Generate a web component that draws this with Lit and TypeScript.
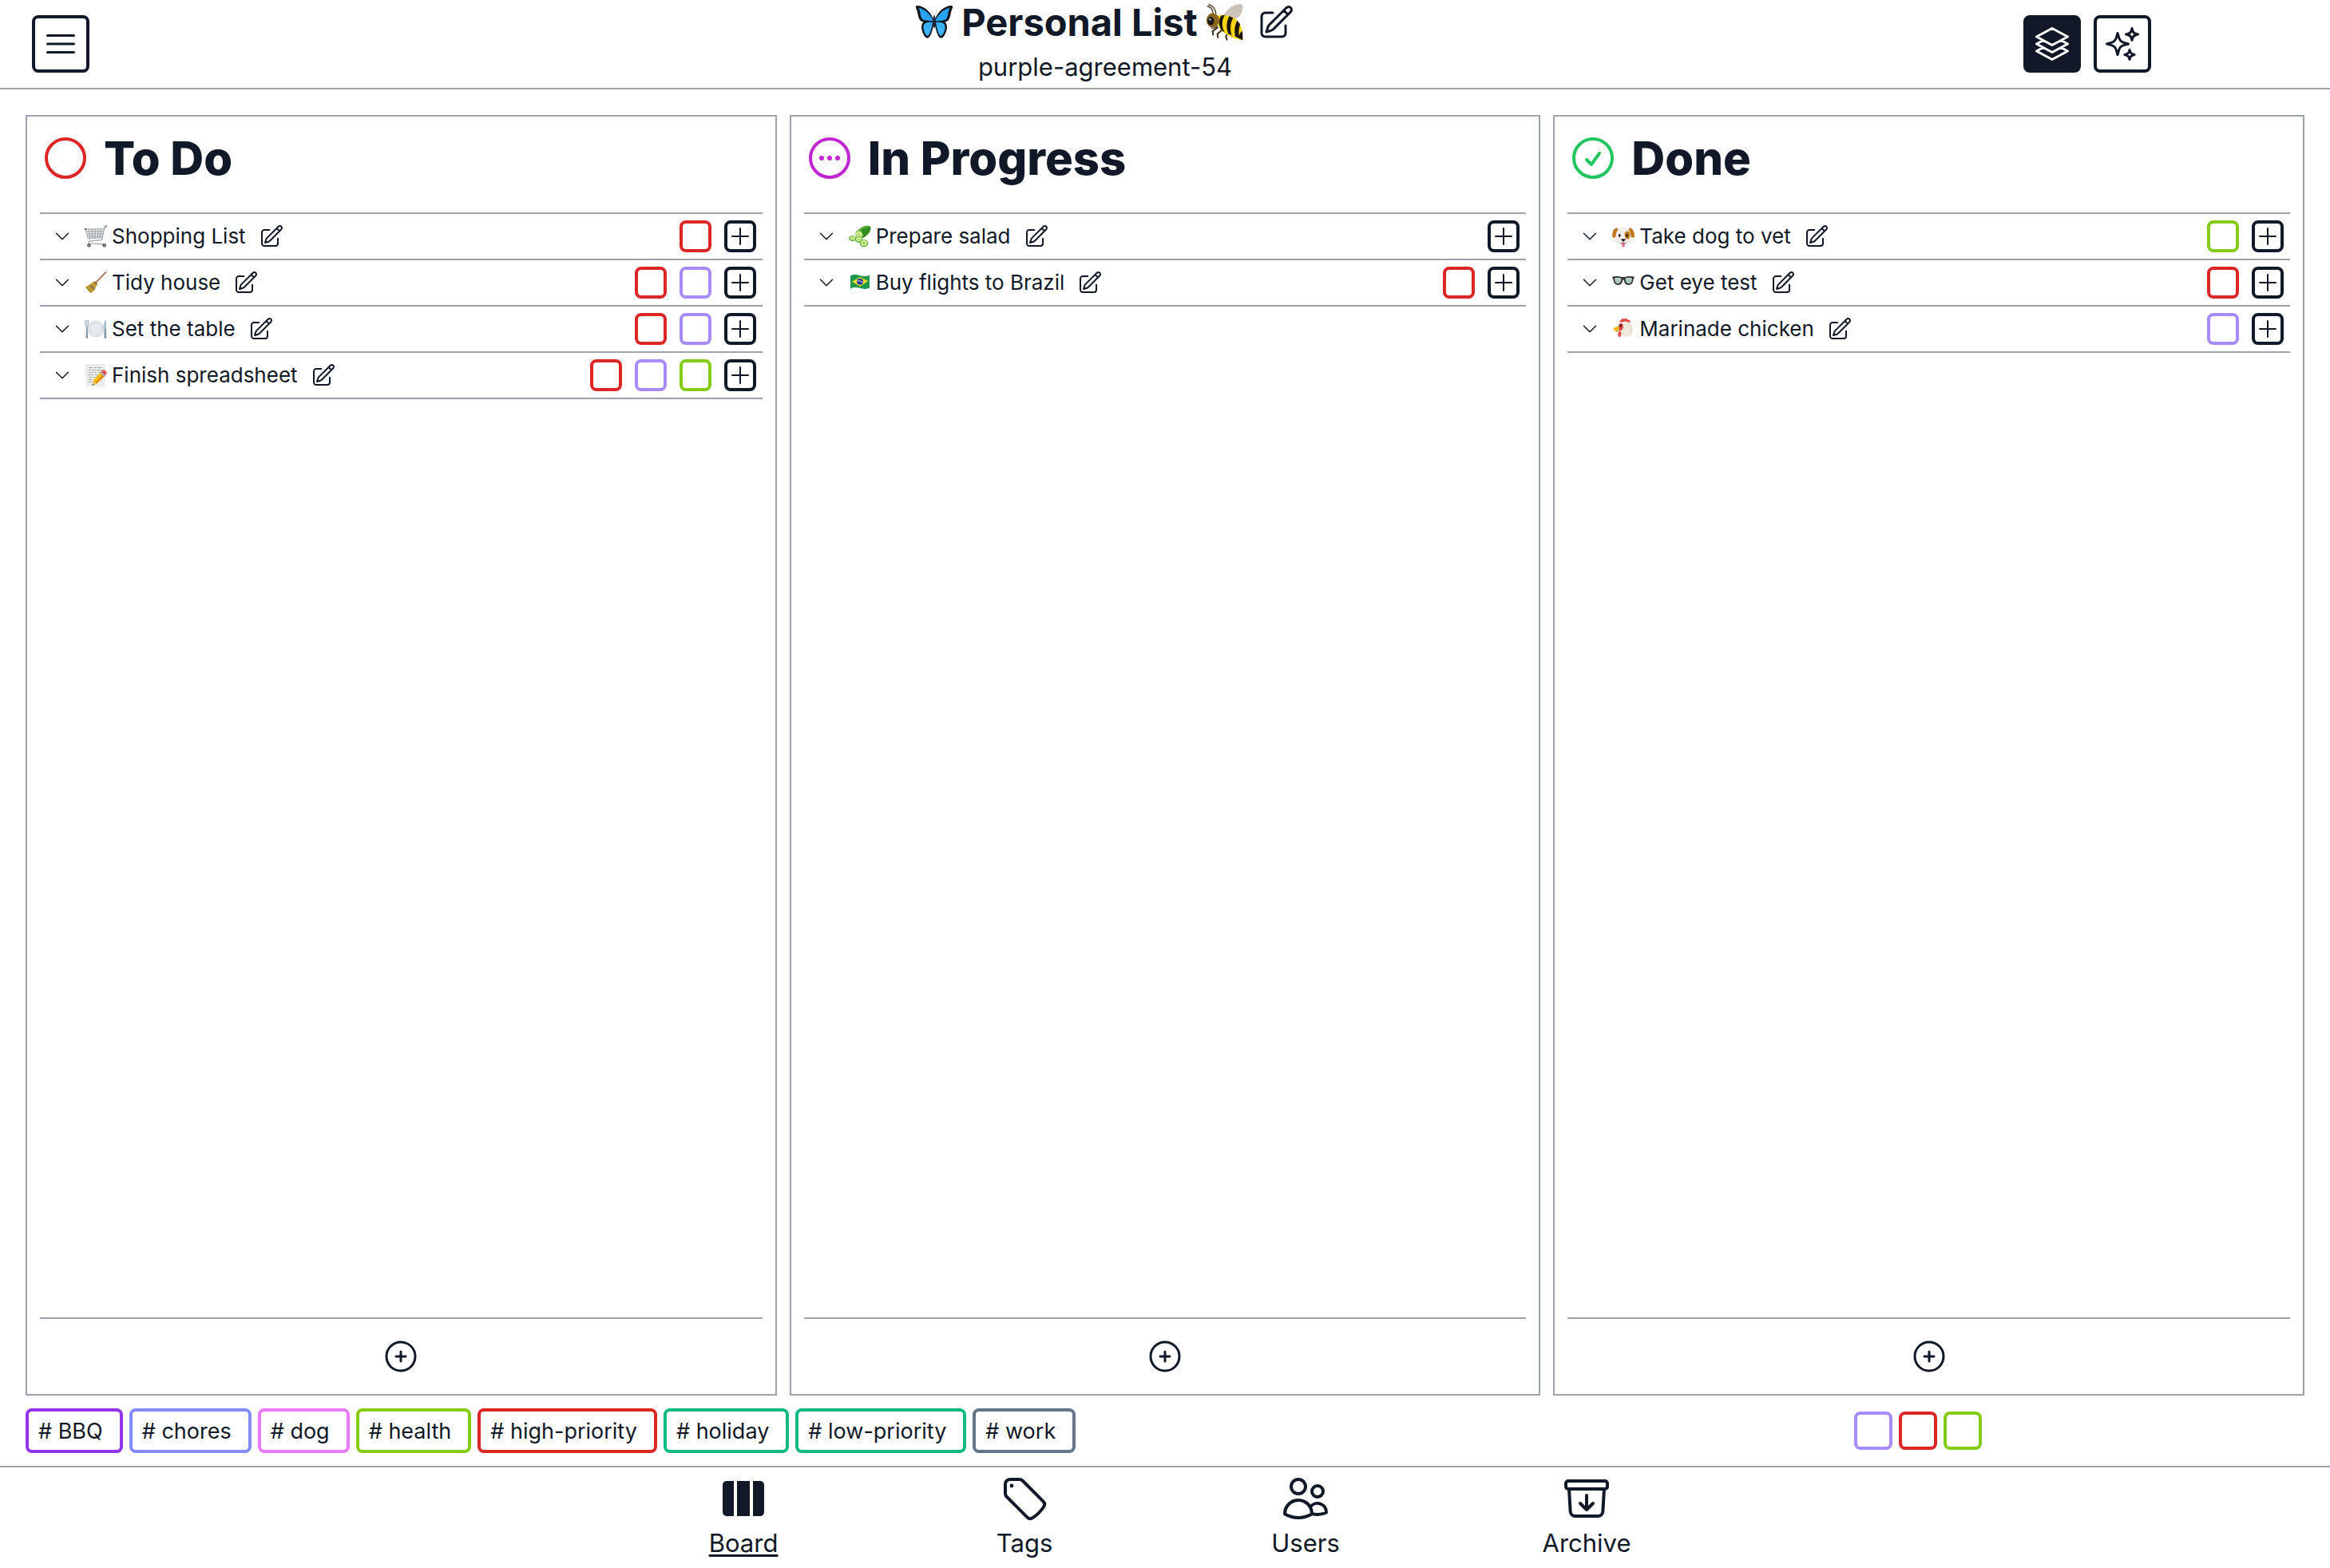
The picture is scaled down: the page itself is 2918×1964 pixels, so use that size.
import { LitElement, html, css, svg, nothing, type TemplateResult, type SVGTemplateResult } from "lit";
import { customElement, property, state } from "lit/decorators.js";
import { classMap } from "lit/directives/class-map.js";

/* ---------- line icons, drawn on a 24 unit grid ---------- */

const CIRCLE = "M21 12a9 9 0 1 1-18 0 9 9 0 0 1 18 0Z";

const ICONS: Record<string, string> = {
  menu: "M3.75 6.75h16.5M3.75 12h16.5M3.75 17.25h16.5",
  layers:
    "M6.429 9.75 2.25 12l4.179 2.25m0-4.5 5.571 3 5.571-3m-11.142 0L2.25 7.5 12 2.25l9.75 5.25-4.179 2.25m0 0L21.75 12l-4.179 2.25m0 0 4.179 2.25L12 21.75 2.25 16.5l4.179-2.25m11.142 0-5.571 3-5.571-3",
  sparkles:
    "M9.813 15.904 9 18.75l-.813-2.846a4.5 4.5 0 0 0-3.09-3.09L2.25 12l2.846-.813a4.5 4.5 0 0 0 3.09-3.09L9 5.25l.813 2.846a4.5 4.5 0 0 0 3.09 3.09L15.75 12l-2.846.813a4.5 4.5 0 0 0-3.09 3.09ZM18.259 8.715 18 9.75l-.259-1.035a3.375 3.375 0 0 0-2.455-2.456L14.25 6l1.036-.259a3.375 3.375 0 0 0 2.455-2.456L18 2.25l.259 1.035a3.375 3.375 0 0 0 2.456 2.456L21.75 6l-1.035.259a3.375 3.375 0 0 0-2.456 2.456ZM16.894 20.567 16.5 21.75l-.394-1.183a2.25 2.25 0 0 0-1.423-1.423L13.5 18.75l1.183-.394a2.25 2.25 0 0 0 1.423-1.423l.394-1.183.394 1.183a2.25 2.25 0 0 0 1.423 1.423l1.183.394-1.183.394a2.25 2.25 0 0 0-1.423 1.423Z",
  edit:
    "m16.862 4.487 1.687-1.688a1.875 1.875 0 1 1 2.652 2.652L10.582 16.07a4.5 4.5 0 0 1-1.897 1.13L6 18l.8-2.685a4.5 4.5 0 0 1 1.13-1.897l8.932-8.931Zm0 0L19.5 7.125M18 14v4.75A2.25 2.25 0 0 1 15.75 21H5.25A2.25 2.25 0 0 1 3 18.75V8.25A2.25 2.25 0 0 1 5.25 6H10",
  chevron: "m19.5 8.25-7.5 7.5-7.5-7.5",
  plus: "M12 4.5v15m7.5-7.5h-15",
  plusCircle: `M12 9v6m3-3H9${CIRCLE}`,
  todo: CIRCLE,
  progress: CIRCLE,
  done: `M9 12.75 11.25 15 15 9.75${CIRCLE}`,
  tag:
    "M9.568 3H5.25A2.25 2.25 0 0 0 3 5.25v4.318c0 .597.237 1.17.659 1.591l9.581 9.581c.699.699 1.78.872 2.607.33a18.095 18.095 0 0 0 5.223-5.223c.542-.827.369-1.908-.33-2.607L11.16 3.66A2.25 2.25 0 0 0 9.568 3Z",
  users:
    "M15 19.128a9.38 9.38 0 0 0 2.625.372 9.337 9.337 0 0 0 4.121-.952 4.125 4.125 0 0 0-7.533-2.493M15 19.128v-.003c0-1.113-.285-2.16-.786-3.07M15 19.128v.106A12.318 12.318 0 0 1 8.624 21c-2.331 0-4.512-.645-6.374-1.766l-.001-.109a6.375 6.375 0 0 1 11.964-3.07M12 6.375a3.375 3.375 0 1 1-6.75 0 3.375 3.375 0 0 1 6.75 0Zm8.25 2.25a2.625 2.625 0 1 1-5.25 0 2.625 2.625 0 0 1 5.25 0Z",
  archive:
    "m20.25 7.5-.625 10.632a2.25 2.25 0 0 1-2.247 2.118H6.622a2.25 2.25 0 0 1-2.247-2.118L3.75 7.5m8.25 3v6.75m0 0-3-3m3 3 3-3M3.375 7.5h17.25c.621 0 1.125-.504 1.125-1.125v-1.5c0-.621-.504-1.125-1.125-1.125H3.375c-.621 0-1.125.504-1.125 1.125v1.5c0 .621.504 1.125 1.125 1.125Z",
};

/* Filled dots that sit on top of the outline of an icon. */
const DOTS: Record<string, SVGTemplateResult> = {
  tag: svg`<circle cx="6" cy="6" r="0.9" fill="currentColor" stroke="none"></circle>`,
  progress: svg`<g fill="currentColor" stroke="none">
    <circle cx="8.25" cy="12" r="1.125"></circle>
    <circle cx="12" cy="12" r="1.125"></circle>
    <circle cx="15.75" cy="12" r="1.125"></circle>
  </g>`,
};

const BOARD_PATH =
  "M15 3.75H9v16.5h6V3.75ZM16.5 20.25h3.375c1.035 0 1.875-.84 1.875-1.875V5.625c0-1.036-.84-1.875-1.875-1.875H16.5v16.5ZM4.125 3.75H7.5v16.5H4.125a1.875 1.875 0 0 1-1.875-1.875V5.625c0-1.036.84-1.875 1.875-1.875Z";

function icon(name: string, size: string): TemplateResult {
  if (name === "board") {
    return html`<svg class="icon ${size}" viewBox="0 0 24 24" fill="currentColor" aria-hidden="true">
      <path d=${BOARD_PATH}></path>
    </svg>`;
  }
  return html`<svg
    class="icon ${size}"
    viewBox="0 0 24 24"
    fill="none"
    stroke="currentColor"
    stroke-width="1.5"
    stroke-linecap="round"
    stroke-linejoin="round"
    aria-hidden="true"
  >
    <path d=${ICONS[name]}></path>
    ${DOTS[name] ?? nothing}
  </svg>`;
}

/* ---------- pictograms, drawn on a 28 unit grid ---------- */

const PICTOS: Record<string, SVGTemplateResult> = {
  butterfly: svg`
    <path d="M13.4 11.5C11 5.500 6 1.800 1.300 1.700c-1 .1-1 1.200-.5 2.100C2 6.200 2 9.800 3.200 11.800c.8 1.300 1.900 1.700 2.900 1.900-1.300 1.500-1.700 3.300-1.300 5.100.6 2.800 2 6.300 4 6.700 2.200.3 4-5 4.700-10z" fill="#14141c"/>
    <path d="M14.600 11.500C17 5.500 22 1.800 26.700 1.700c1 .1 1 1.200.5 2.100-1.200 2.400-1.200 6-2.400 8-.8 1.300-1.900 1.700-2.900 1.900 1.300 1.500 1.700 3.300 1.300 5.100-.6 2.800-2 6.300-4 6.700-2.200.3-4-5-4.700-10z" fill="#14141c"/>
    <path d="M13 12.300C10.600 7.500 6.600 4.300 2.700 3.400c1.300 2.500 1.100 6.200 2.400 8 1 1.200 5 1.700 7.900 1.600z" fill="#2aa5f5"/>
    <path d="M15 12.300c2.400-4.800 6.400-8 10.300-8.900-1.300 2.500-1.100 6.200-2.400 8-1 1.200-5 1.700-7.900 1.600z" fill="#2aa5f5"/>
    <path d="M12.800 14c-2.500-.3-4.800.1-6 1.300-.9 1.100-.9 2.800-.4 4.300.5 1.800 1.400 4 2.600 4.300 1.600.1 3-4.600 3.800-9.900z" fill="#3db4fa"/>
    <path d="M15.200 14c2.500-.3 4.800.1 6 1.300.9 1.100.9 2.800.4 4.300-.5 1.800-1.400 4-2.600 4.300-1.600.1-3-4.600-3.800-9.900z" fill="#3db4fa"/>
    <path d="M12.800 12.500 5 6M12.500 14.500l-5 3.500M15.200 12.500 23 6M15.500 14.500l5 3.500" stroke="#1f8be0" stroke-width=".4" fill="none"/>
    <path d="M13.700 9.500 12 4.500M14.300 9.500 16 4.500" stroke="#c9c9c9" stroke-width=".5" fill="none"/>
    <ellipse cx="14" cy="13.500" rx=".9" ry="4.800" fill="#1d2a44"/>`,
  bee: svg`
    <path d="M12.500 9.500C15 5 19.500.8 24.500.6c2-.1 2.800 1 2.600 2.800-.3 3.200-1.800 6.400-4.300 7.600-3 1-8 .3-10.300-1.500z" fill="#cdc6bb"/>
    <path d="M14 9.500C17 6 21 3 26 2.400M16 10.200c3-2.200 6-4 10-5" stroke="#bab2a7" stroke-width=".5" fill="none"/>
    <path d="M5.500 8c-.4-3-1.300-5.600-4.500-5.800M7.500 7.500C7.200 4.500 5 1.500 2 .9" stroke="#4a3c20" stroke-width=".8" fill="none"/>
    <path d="M9 17.500 5 20.500l.5 3M12 19.500l-3.500 3 .6 3M16.500 21l-1.800 3.500 1 2.500M20 22l-.8 3" stroke="#33250f" stroke-width="1.100" fill="none"/>
    <path d="M8 9.500c5.500-1.700 13-.4 16.500 5 2 3.200 2.500 8 2.500 12.500-3.500-.8-7.500-1.500-11-4C11.500 21 7.500 17 8 9.500z" fill="#f6d50f"/>
    <path d="M11.300 9c-2 3-2 6.500 0 10.500l2.600 2c-2.400-4.500-2.400-9 .1-12.700zM17.200 9.500c-2.200 4-2.400 8.300-.7 12.800l2.600 1.200c-1.600-4.500-1.200-9 1-12.700zM23 12.700c-2 3.700-2.200 7.300-1.400 11.600L27 27c.1-2.500 0-4.700-.3-6.700-1.200 1-2 2-2.500 3.400-.2-3.300.1-6 1-8.200z" fill="#1c1606"/>
    <ellipse cx="5.200" cy="12.500" rx="4.700" ry="5.300" fill="#8a661f"/>
    <ellipse cx="3.700" cy="13" rx="2.400" ry="3.100" fill="#1b1512"/>
    <circle cx="3.200" cy="11.800" r=".9" fill="#8f99a5"/>
    <path d="M4 18c1.500.5 3.500 0 4.500-1.500" stroke="#3b2a0d" stroke-width=".7" fill="none"/>`,
  cart: svg`
    <path d="M1 4.800h23.200l-2.500 10.600L4.200 17z" fill="#eef0f1"/>
    <path d="M1 4.800h23.200M1.700 7.800h22M2.500 10.800h20.400M3.300 13.800h19M4.200 17l18-1.600M5 5l2 12M9 5l1 11.500M13 5v11.500M17 5l-.7 11M21 5l-2 10.500M1 4.800 4.200 17" stroke="#8a8f94" stroke-width=".8" fill="none"/>
    <path d="M27.500.8 25 2.200 21.600 18.400 6 20.200c-1.500.4-1.400 2.500.2 2.700L25 24" stroke="#a2a6aa" stroke-width="1.300" fill="none"/>
    <path d="M25.300 2.200 27.800.6" stroke="#7e5a55" stroke-width="1.300"/>
    <path d="M0 4.200h2.200v1.600H0z" fill="#27425d"/>
    <circle cx="5.500" cy="25.300" r="2.300" fill="#55585b"/><circle cx="5.500" cy="25.300" r=".8" fill="#c9ccce"/>
    <circle cx="24.800" cy="25.300" r="2.300" fill="#55585b"/><circle cx="24.800" cy="25.300" r=".8" fill="#c9ccce"/>`,
  broom: svg`
    <path d="M12.500 15.500 26.800.8" stroke="#8d5a3a" stroke-width="1.500" stroke-linecap="round"/>
    <path d="M12.600 12.600 8.500 14.500C6.500 17 3.500 18.500 1 19.400c2 2.800 4.500 6 6.500 7.600 2.300-.8 4.500-3 5.700-5.500l2.600-5.600z" fill="#c9a23c"/>
    <path d="M12.800 12.200 16 15.600 14.600 17 11.200 13.300z" fill="#8a6a22"/>
    <path d="m5.800 17 6.400 6 .6-1-6-5.600z" fill="#6b4a5c"/>
    <path d="M3 19.500 8.500 25M5.500 18.500l5 5.500M1.500 19.800l6 6.500M9 15.500l4.500 4.500" stroke="#8c6a1b" stroke-width=".6"/>`,
  plate: svg`
    <circle cx="14" cy="14" r="9.800" fill="#e4e7ec" stroke="#c9ced6" stroke-width=".8"/>
    <circle cx="14" cy="14" r="6.300" fill="#f4f6f8" stroke="#cfd3d8" stroke-width=".8"/>
    <circle cx="14" cy="14.500" r="4.800" fill="#e6e9ed"/>
    <path d="M1 3v5.500c0 1.500 1 2.300 1.200 2.300h.9c.4 0 1.500-.8 1.500-2.300V3" stroke="#8fa7bd" stroke-width="1" fill="none"/>
    <path d="M2.800 3v7" stroke="#8fa7bd" stroke-width=".8"/>
    <path d="m2.100 10.500-.6 14.300c0 1.600 2.600 1.600 2.600 0l-.6-14.300z" fill="#8398ad"/>
    <path d="M27 3c-2.800.8-3.600 6-3.400 11h3.400z" fill="#a9c0d6"/>
    <path d="M24.400 14h2.600l.3 10.800c0 1.600-2.800 1.600-2.800 0z" fill="#8398ad"/>`,
  memo: svg`
    <path d="M2.500.8h22.500v26.400H2.500z" fill="#eceeec" stroke="#d3d6d4" stroke-width=".6"/>
    <path d="M5.500 4.500h5m1.500 0h3m1.500 0h5M5 7.500h3m1.500 0h5m1.500 0h6M5.500 10.500h5m1.500 0h3m2 0h4M5 13.500h6m2 0h3M5.500 16.500h4m2 0h3M5 19.500h4M5.500 22.500h3" stroke="#777c79" stroke-width=".8" stroke-dasharray="1.800 .5"/>
    <path d="m20.300 9.700 5.600 4.800L14.600 25 10 26.500l.3-5.500z" fill="#f9bd19"/>
    <path d="m23.200 12.200 2.700 2.300L14.600 25l-1.500-1.300z" fill="#e79009"/>
    <path d="m20.300 9.700 1.700-1.600c1.300-1.200 3.200-.6 4.400.5 1.300 1.200 1.700 2.900.7 4l-1.200 1.900z" fill="#e0575c"/>
    <path d="m19 11 1.500-1.500 5.600 4.900L24.600 16z" fill="#a9aeb3"/>
    <path d="m10.300 21 4.300 4L10 26.500z" fill="#e9c98f"/>
    <path d="m10.200 24.500 1.500 1.400-2.500.9z" fill="#343434"/>`,
  cucumber: svg`
    <path d="M10 8.200C14 3 20.500 0 25 .7c3 .6 3.200 3.800 1.600 7-2 3.900-6 7-9.800 8.600z" fill="#2f8f1f"/>
    <path d="M13 7c4-3.800 8.600-5.600 12-5" stroke="#6cc043" stroke-width="1.300" fill="none"/>
    <ellipse cx="13.200" cy="11.300" rx="4.600" ry="5.200" transform="rotate(-35 13.200 11.300)" fill="#5bb02f"/>
    <ellipse cx="13" cy="11.500" rx="3.700" ry="4.300" transform="rotate(-35 13 11.500)" fill="#cdeb92"/>
    <ellipse cx="4.800" cy="16.500" rx="4.700" ry="3.500" fill="#4ca52a"/><ellipse cx="5" cy="16.200" rx="3.700" ry="2.600" fill="#c2e684"/>
    <ellipse cx="12.500" cy="18" rx="4.700" ry="3.900" fill="#4ca52a"/><ellipse cx="12.600" cy="17.700" rx="3.700" ry="3" fill="#cdeb92"/>
    <ellipse cx="19" cy="22.700" rx="5.200" ry="4.500" fill="#4ca52a"/><ellipse cx="19" cy="22.400" rx="4.200" ry="3.600" fill="#c8e98b"/>
    <path d="m17.500 21 3 3m-3.400-1.200 3.600-.8m-9.500-5 3 1.600M11 11l3.500 1.500" stroke="#92c456" stroke-width=".9"/>`,
  flag: svg`
    <path d="M2 5.500c5-2.600 9-1.400 12.500-.3 3.500 1 7.500 1.400 11.500-.7v16c-4.500 2.300-8.500 1.300-12 .3-3.500-1-7.500-1.600-12 .7z" fill="#1f9a49"/>
    <path d="M4 12.800 14 7l10.200 5L14 18.800z" fill="#fbd82b"/>
    <circle cx="14" cy="12.800" r="4" fill="#2c3f94"/>
    <path d="M10.200 11.800c2.700-.4 5.400.3 7.500 2.200" stroke="#dfe6f5" stroke-width=".9" fill="none"/>`,
  dog: svg`
    <path d="M6.500 3.500C2.500 3 .2 8 .1 13c0 3.300 2.800 3.800 4.600 1.500l3-9z" fill="#c2781f"/>
    <path d="M21.500 3.500c4-.5 6.300 4.500 6.400 9.500 0 3.300-2.800 3.800-4.600 1.500l-3-9z" fill="#c2781f"/>
    <path d="M14 2.800c5 0 8.700 3.600 9.200 9.200.3 3.500 2.400 5.400 1.600 8-1 3.300-5.500 4.600-10.800 4.600S4.200 23.300 3.200 20c-.8-2.600 1.300-4.500 1.600-8C5.300 6.400 9 2.800 14 2.800z" fill="#f1eeea"/>
    <path d="M15.500 11c.5-3 3.500-4.700 5.700-2.800 2 2 1.700 6.800-.4 8.800-1.900 1.500-4 .2-4.700-2z" fill="#c47a24"/>
    <ellipse cx="9.300" cy="13" rx="1.300" ry="1.900" fill="#23180f"/><ellipse cx="18.700" cy="13" rx="1.300" ry="1.900" fill="#23180f"/>
    <path d="M12.200 22.500h3.600V26c0 2-3.600 2-3.600 0z" fill="#f0718e"/>
    <path d="M11.600 17.200h4.800c.4 1.800-1.300 2.900-2.400 2.900s-2.800-1.100-2.400-2.900z" fill="#15110f"/>
    <path d="M14 20v1.800M10.300 21.700c1.200 1.300 2.900 1.200 3.700.2.800 1 2.500 1.100 3.700-.2" stroke="#3a2c24" stroke-width=".7" fill="none"/>`,
  glasses: svg`
    <path d="M.3 6.600C4 5.400 9.500 5.800 12 7h4c2.500-1.200 8-1.600 11.700-.4l-.3 2.400-.8.600c-.3 4-1.700 7.400-6 7.400-4 0-5.300-2.800-5.800-6-.3-.9-1.300-.9-1.600 0-.5 3.200-1.800 6-5.800 6-4.300 0-5.700-3.400-6-7.400L.6 9z" fill="#2d2f31"/>
    <path d="M3 8.300c2.500-1 6.500-.8 8.400.4.300 3.700-1.200 6.600-4.200 6.600S3 12.500 3 8.300zM25 8.300c-2.500-1-6.500-.8-8.400.4-.3 3.700 1.200 6.600 4.200 6.600s4.200-2.800 4.200-7z" fill="#a9c8bf"/>
    <path d="M4 9c2-.7 4-.6 6 .1M18 9.100c2-.7 4-.8 6-.1" stroke="#d5e7e1" stroke-width="1" fill="none"/>`,
  chicken: svg`
    <path d="M9.500 5.500C9.500 3.500 10 2.800 11.300 3 11.600.8 14 .2 15 2c1.500-2 4.300-1.200 4.200.7 2.200-.6 3.800 1 3.300 3.300z" fill="#e24440"/>
    <path d="M9 9.500C10.500 5.500 15 3.800 19 5c5 1.800 7 7.500 6.500 12.500-.4 4.300-3.500 6.300-8 6.300-4.500 0-7-2-8-5.500z" fill="#efe6dc"/>
    <path d="M20.500 7c4 2.500 5 7.500 3.800 12.500" stroke="#d8cbbd" stroke-width=".9" fill="none"/>
    <path d="M8.500 8.500c2-2.300 4.600-1.700 5.200 1.200.6 2.600-.5 5.400-2.600 6.200-2 .5-3-.5-3.400-2z" fill="#e0413e"/>
    <path d="M1 13.800c1.500-1.200 3.800-3.200 7-3.200 1 1.500 1.100 3.900.2 5.600-2 1.400-5.300.3-7.200-2.400z" fill="#f7bb22"/>
    <path d="M3.500 15.900c1.800.8 3.500.8 4.800.2-.3 1.600-2 2-3.300 1.500-.8-.4-1.300-1-1.500-1.700z" fill="#d98c10"/>
    <ellipse cx="10.500" cy="9.800" rx="1.200" ry="1.800" fill="#26211f"/>
    <path d="M8.800 16.500c2 0 2.700 2 2.600 4.200-.1 3.800-3.600 4.200-4 1.200-.2-1.800.5-3.700 1.400-5.400z" fill="#e24440"/>`,
};

const picto = (name: string, size: string) =>
  html`<svg class="icon ${size}" viewBox="0 0 28 28" aria-hidden="true">${PICTOS[name]}</svg>`;

/* ---------- data ---------- */

interface Task {
  picto: string;
  name: string;
  tags: string[];
}
interface Column {
  id: string;
  title: string;
  tasks: Task[];
}

const COLUMNS: Column[] = [
  {
    id: "todo",
    title: "To Do",
    tasks: [
      { picto: "cart", name: "Shopping List", tags: ["red"] },
      { picto: "broom", name: "Tidy house", tags: ["red", "violet"] },
      { picto: "plate", name: "Set the table", tags: ["red", "violet"] },
      { picto: "memo", name: "Finish spreadsheet", tags: ["red", "violet", "lime"] },
    ],
  },
  {
    id: "progress",
    title: "In Progress",
    tasks: [
      { picto: "cucumber", name: "Prepare salad", tags: [] },
      { picto: "flag", name: "Buy flights to Brazil", tags: ["red"] },
    ],
  },
  {
    id: "done",
    title: "Done",
    tasks: [
      { picto: "dog", name: "Take dog to vet", tags: ["lime"] },
      { picto: "glasses", name: "Get eye test", tags: ["red"] },
      { picto: "chicken", name: "Marinade chicken", tags: ["violet"] },
    ],
  },
];

const TAGS = [
  { name: "BBQ", color: "purple" },
  { name: "chores", color: "indigo" },
  { name: "dog", color: "pink" },
  { name: "health", color: "lime" },
  { name: "high-priority", color: "red" },
  { name: "holiday", color: "emerald" },
  { name: "low-priority", color: "emerald" },
  { name: "work", color: "slate" },
];

const PEOPLE = ["violet", "red", "lime"];

const PAGES = [
  { id: "board", label: "Board" },
  { id: "tag", label: "Tags" },
  { id: "users", label: "Users" },
  { id: "archive", label: "Archive" },
];

/* ---------- shared styles ---------- */

const shared = css`
  *,
  *::before,
  *::after {
    box-sizing: border-box;
  }
  h1,
  h2,
  p,
  ul {
    margin: 0;
    padding: 0;
  }
  ul {
    list-style: none;
  }
  button {
    display: flex;
    align-items: center;
    justify-content: center;
    flex: none;
    margin: 0;
    padding: 0;
    border: 0;
    background: none;
    color: inherit;
    font: inherit;
    cursor: pointer;
  }
  .icon {
    display: block;
    flex: none;
  }
  .xs {
    width: 24px;
    height: 24px;
  }
  .sm {
    width: 28px;
    height: 28px;
  }
  .md {
    width: 32px;
    height: 32px;
  }
  .lg {
    width: 48px;
    height: 48px;
  }
  .xl {
    width: 64px;
    height: 64px;
  }
  .box {
    border: 4px solid currentColor;
    border-radius: 8px;
  }
  .red {
    border-color: #dc2626;
  }
  .violet {
    border-color: #a78bfa;
  }
  .lime {
    border-color: #84cc16;
  }
  .purple {
    border-color: #9333ea;
  }
  .indigo {
    border-color: #818cf8;
  }
  .pink {
    border-color: #e879f9;
  }
  .emerald {
    border-color: #10b981;
  }
  .slate {
    border-color: #64748b;
  }
`;

@customElement("board-column")
export class BoardColumn extends LitElement {
  @property({ attribute: false }) column!: Column;

  static styles = [
    shared,
    css`
      :host {
        display: flex;
        flex-direction: column;
        min-width: 0;
        padding: 16px 16px 0;
        border: 2px solid #9ca3af;
        box-sizing: border-box;
      }
      .head {
        display: flex;
        align-items: center;
        gap: 16px;
        height: 72px;
        margin-bottom: 32px;
      }
      .head h2 {
        font-size: 58px;
        line-height: 72px;
        font-weight: 800;
      }
      .todo {
        color: #dc2626;
      }
      .progress {
        color: #c026d3;
      }
      .done {
        color: #22c55e;
      }
      .tasks {
        flex: 1;
        border-top: 2px solid #9ca3af;
      }
      .task {
        display: flex;
        align-items: center;
        gap: 16px;
        min-height: 58px;
        padding: 0 8px 0 16px;
        border-bottom: 2px solid #9ca3af;
      }
      .name {
        display: flex;
        align-items: center;
        gap: 6px;
        font-size: 26px;
        line-height: 40px;
        white-space: nowrap;
      }
      .tags {
        display: flex;
        gap: 16px;
        margin-left: auto;
      }
      .tag {
        width: 40px;
        height: 40px;
      }
      .add {
        height: 96px;
        border-top: 2px solid #9ca3af;
        display: flex;
        align-items: center;
        justify-content: center;
      }
    `,
  ];

  render() {
    const { id, title, tasks } = this.column;
    return html`
      <header class="head">
        <span class=${id}>${icon(id, "xl")}</span>
        <h2>${title}</h2>
      </header>
      <ul class="tasks">
        ${tasks.map(
          (task) => html`<li class="task">
            <button aria-label="Expand ${task.name}">${icon("chevron", "xs")}</button>
            <span class="name">${picto(task.picto, "sm")}<span>${task.name}</span></span>
            <button aria-label="Edit ${task.name}">${icon("edit", "md")}</button>
            <div class="tags">
              ${task.tags.map((c) => html`<button class="box tag ${c}" aria-label="Remove ${c} tag"></button>`)}
              <button class="box tag" aria-label="Add tag">${icon("plus", "md")}</button>
            </div>
          </li>`,
        )}
      </ul>
      <div class="add"><button aria-label="Add task to ${title}">${icon("plusCircle", "lg")}</button></div>
    `;
  }
}

@customElement("app-root")
export class AppRoot extends LitElement {
  @state() private page = "board";

  static styles = [
    shared,
    css`
      :host {
        display: flex;
        flex-direction: column;
        min-height: 100vh;
        background: #fff;
        color: #111827;
        font-family: Inter, "Liberation Sans", sans-serif;
        font-size: 27px;
      }
      .top {
        display: grid;
        grid-template-columns: 1fr auto 1fr;
        grid-template-rows: 110px;
        align-items: center;
        padding: 0 190px 0 40px;
        border-bottom: 2px solid #9ca3af;
      }
      .tool {
        width: 72px;
        height: 72px;
      }
      .tools {
        display: flex;
        justify-content: flex-end;
        gap: 16px;
        padding-right: 34px;
      }
      .tool.on {
        background: #111827;
        border-color: #111827;
      }
      .on .icon {
        color: #fff;
      }
      .heading {
        display: flex;
        flex-direction: column;
        align-items: center;
        align-self: start;
      }
      .title {
        display: flex;
        align-items: center;
        gap: 16px;
        height: 56px;
      }
      .title h1 {
        display: flex;
        align-items: center;
        gap: 10px;
        font-size: 47px;
        line-height: 56px;
        font-weight: 700;
      }
      .slug {
        font-size: 31px;
        line-height: 56px;
      }
      .board {
        flex: 1;
        display: grid;
        grid-template-columns: repeat(3, minmax(0, 1fr));
        gap: 16px;
        padding: 32px 32px 0;
      }
      .filters {
        display: grid;
        grid-template-columns: 2fr 1fr;
        align-items: center;
        padding: 16px 32px;
      }
      .chips,
      .people {
        display: flex;
        flex-wrap: wrap;
        gap: 8px;
      }
      .people {
        justify-content: center;
        padding-right: 16px;
      }
      .chip {
        height: 56px;
        padding: 0 21px 0 12px;
      }
      .person {
        width: 48px;
        height: 48px;
      }
      .nav {
        display: flex;
        justify-content: center;
        padding: 7px 0;
        border-top: 2px solid #9ca3af;
      }
      .nav a {
        display: flex;
        flex-direction: column;
        align-items: center;
        flex: 0 1 352px;
        color: inherit;
        font-size: 31px;
        line-height: 48px;
        text-decoration: none;
      }
      .nav .current span {
        text-decoration: underline 3px;
        text-underline-offset: 3px;
        text-decoration-skip-ink: none;
      }
    `,
  ];

  private go(event: Event, id: string) {
    event.preventDefault();
    this.page = id;
  }

  render() {
    return html`
      <header class="top">
        <button class="box tool" aria-label="Menu">${icon("menu", "lg")}</button>
        <div class="heading">
          <div class="title">
            <h1>${picto("butterfly", "lg")}<span>Personal List</span>${picto("bee", "lg")}</h1>
            <button aria-label="Rename list">${icon("edit", "lg")}</button>
          </div>
          <p class="slug">purple-agreement-54</p>
        </div>
        <div class="tools">
          <button class="box tool on" aria-label="Stacked view">${icon("layers", "lg")}</button>
          <button class="box tool" aria-label="Suggestions">${icon("sparkles", "lg")}</button>
        </div>
      </header>
      <main class="board">${COLUMNS.map((c) => html`<board-column .column=${c}></board-column>`)}</main>
      <section class="filters">
        <div class="chips">
          ${TAGS.map((t) => html`<button class="box chip ${t.color}"># ${t.name}</button>`)}
        </div>
        <div class="people">
          ${PEOPLE.map((c) => html`<button class="box person ${c}" aria-label="Filter by ${c}"></button>`)}
        </div>
      </section>
      <nav class="nav">
        ${PAGES.map(
          (p) => html`<a
            href="#${p.id}"
            class=${classMap({ current: p.id === this.page })}
            @click=${(e: Event) => this.go(e, p.id)}
            >${icon(p.id, "xl")}<span>${p.label}</span></a
          >`,
        )}
      </nav>
    `;
  }
}
